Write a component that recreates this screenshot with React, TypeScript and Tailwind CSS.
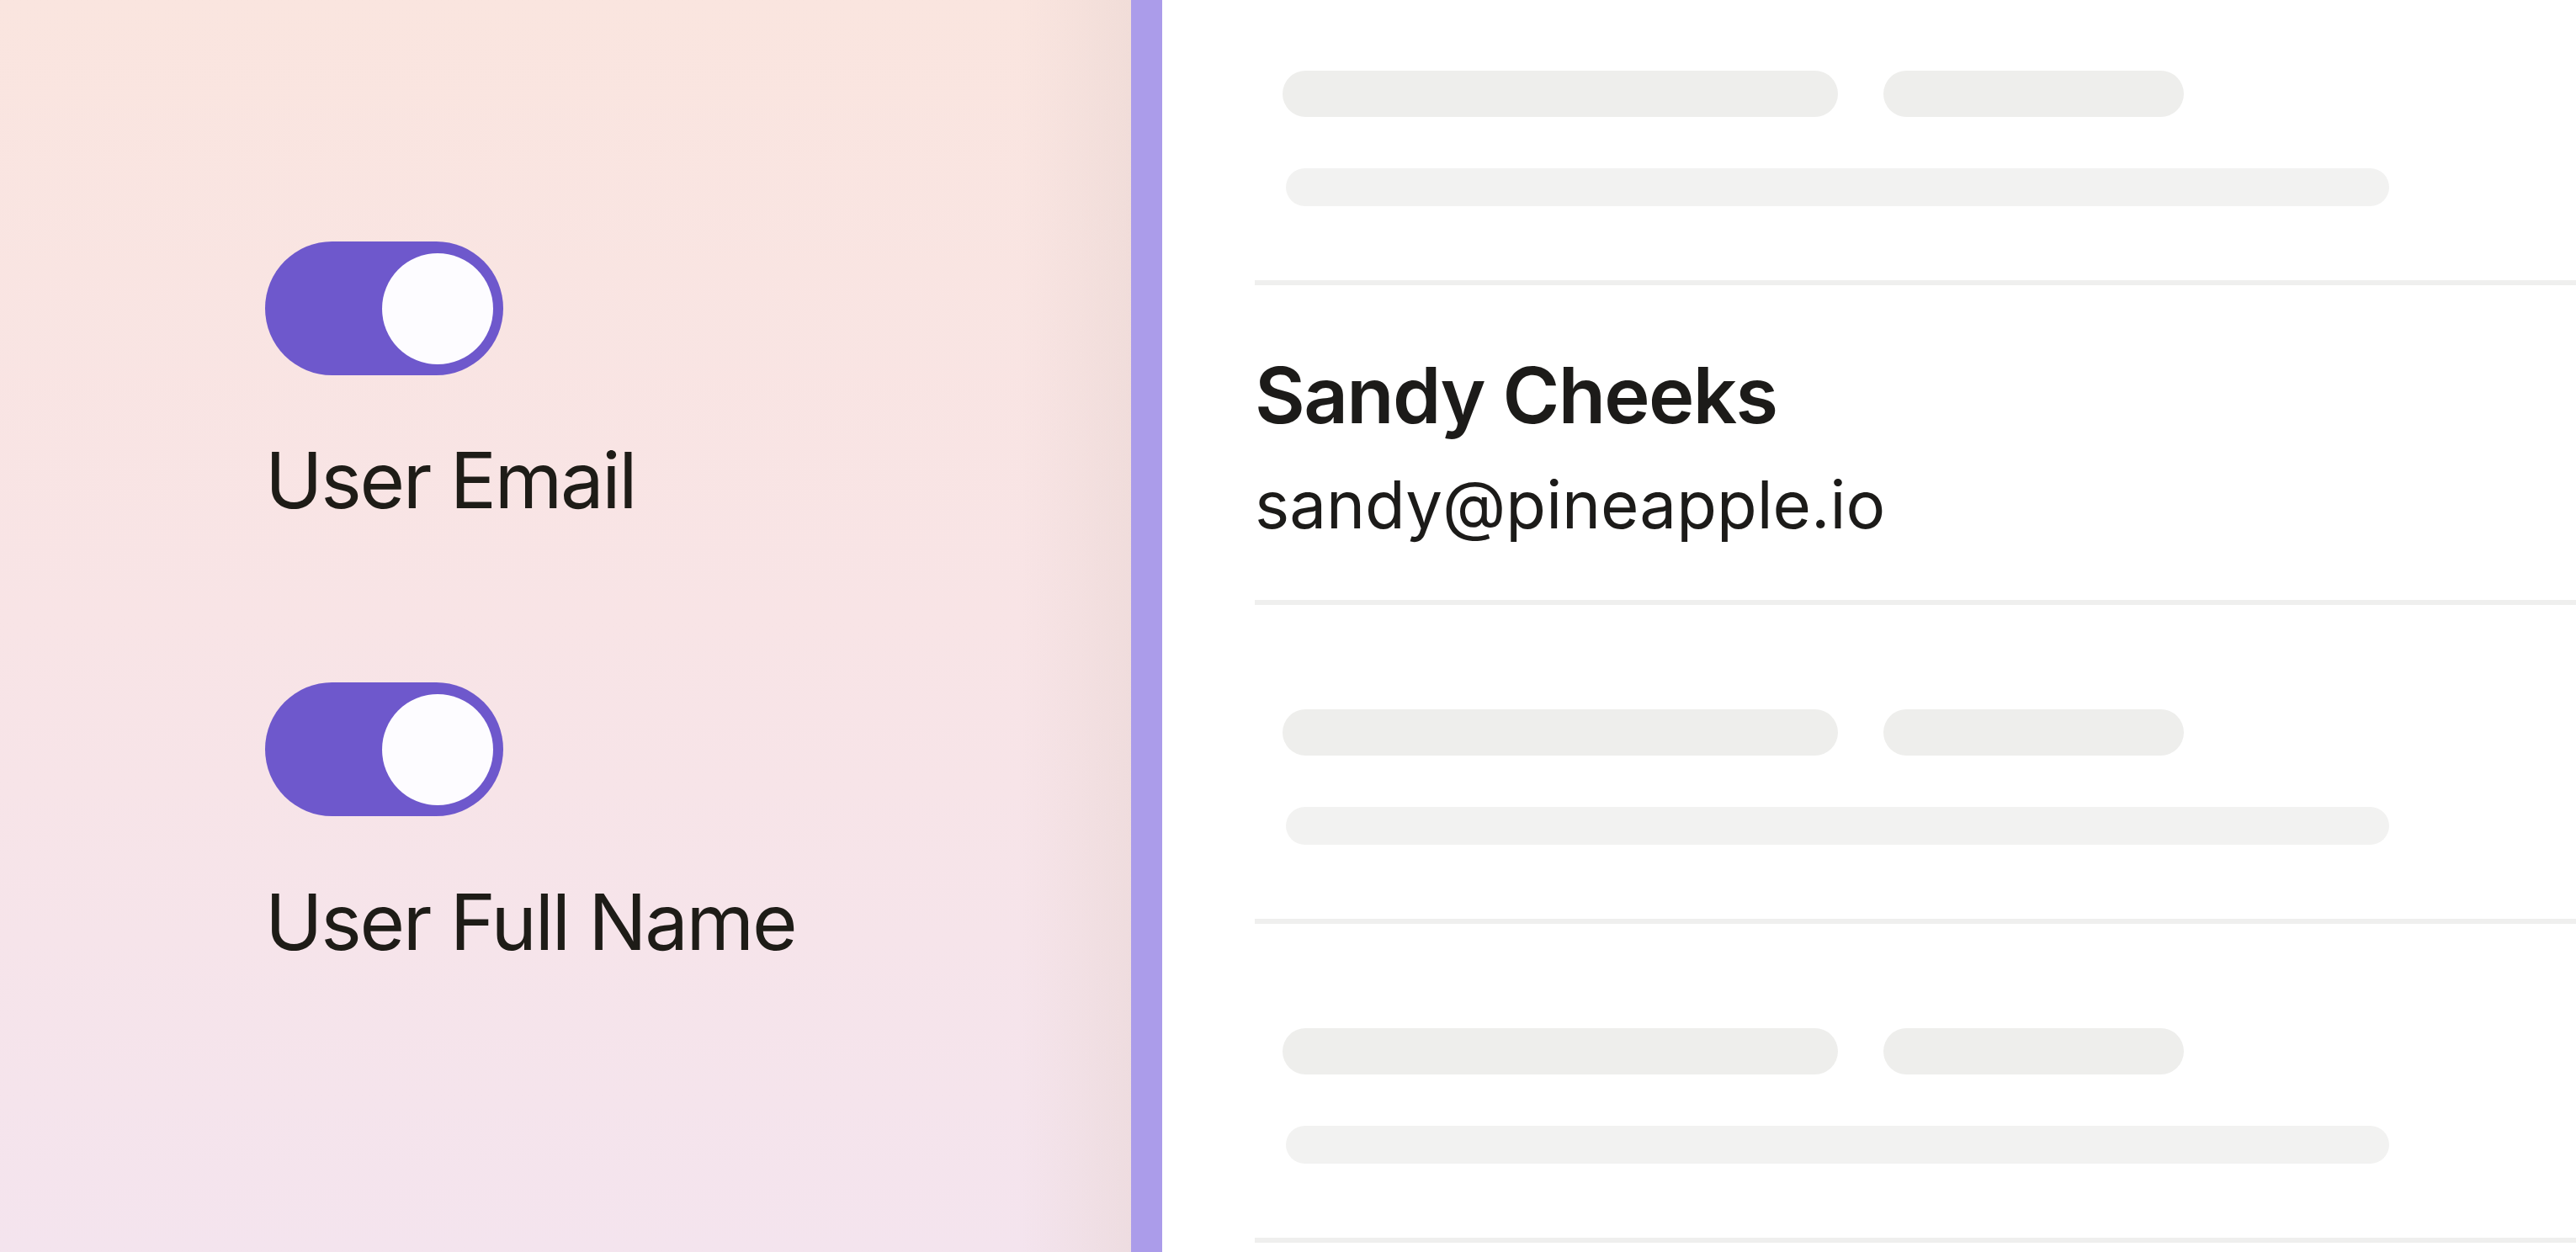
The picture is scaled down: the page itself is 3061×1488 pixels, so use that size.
const font = { fontFamily: 'Inter, "Noto Sans", sans-serif' };

function Toggle() {
  return (
    <div className="flex h-[159px] w-[283px] items-center justify-end rounded-full bg-[#6e58cc] pr-[12px]">
      <div className="h-[132px] w-[132px] rounded-full bg-[#fdfcff]" />
    </div>
  );
}

function SkeletonRow({ first }: { first?: boolean }) {
  return (
    <div className={`border-b-[6px] border-[#efefee] pb-[88px] ${first ? 'pt-[84px]' : 'pt-[124px]'}`}>
      <div className="flex gap-[54px] pl-[33px]">
        <div className="h-[55px] w-[660px] rounded-full bg-[#eeeeec]" />
        <div className="h-[55px] w-[357px] rounded-full bg-[#eeeeec]" />
      </div>
      <div className="mt-[61px] ml-[37px] h-[45px] w-[1311px] rounded-full bg-[#f2f2f1]" />
    </div>
  );
}

export default function App() {
  return (
    <div className="flex h-[1488px] w-[3061px] overflow-hidden bg-white" style={font}>
      <div className="relative w-[1344px] shrink-0 bg-gradient-to-b from-[#fae5df] via-[#f8e4e6] to-[#f4e4ee]">
        <div className="absolute inset-y-0 right-0 w-[130px] bg-gradient-to-r from-transparent to-[#e6d3d0]/45" />
        <div className="relative flex flex-col pl-[315px] pt-[287px] text-[92px] leading-none tracking-[-0.025em] text-[#1e1c17]">
          <Toggle />
          <div className="mt-[79px]">User Email</div>
          <div className="mt-[194px]">
            <Toggle />
          </div>
          <div className="mt-[80px]">User Full Name</div>
        </div>
      </div>
      <div className="w-[37px] shrink-0 bg-[#ab9cea]" />
      <div className="flex-1 pl-[110px]">
        <SkeletonRow first />
        <div className="border-b-[6px] border-[#efefee] pt-[85px] pb-[74px] text-[#1c1b19]">
          <div className="text-[92px] font-semibold leading-none tracking-[-0.018em]">Sandy Cheeks</div>
          <div className="mt-[45px] text-[78px] leading-none">sandy@pineapple.io</div>
        </div>
        <SkeletonRow />
        <SkeletonRow />
      </div>
    </div>
  );
}
